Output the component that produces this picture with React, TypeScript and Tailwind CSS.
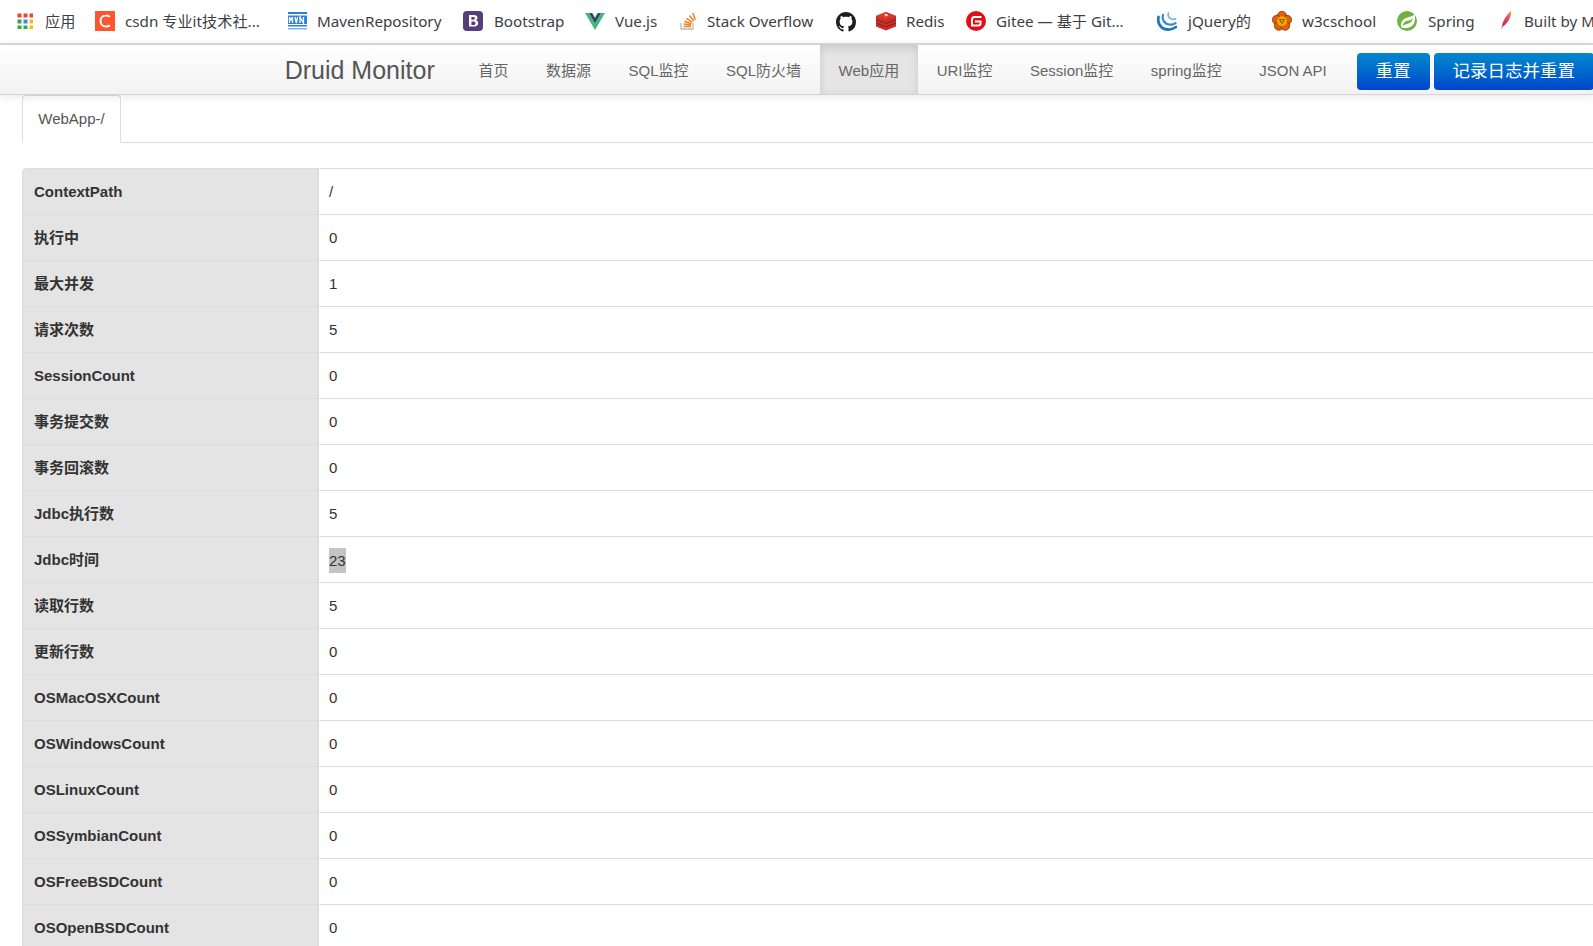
import React from "react";

const sans = `font-['Liberation_Sans','Noto_Sans_CJK_SC',sans-serif]`;

function AppsIcon() {
  const colors = ["#ea4335", "#ea4335", "#ea4335", "#34a853", "#4285f4", "#fbbc04", "#34a853", "#34a853", "#fbbc04"];
  return (
    <svg width="16" height="16" viewBox="0 0 16 16">
      {colors.map((c, i) => (
        <rect key={i} x={(i % 3) * 6 + 0.5} y={Math.floor(i / 3) * 6 + 0.5} width="4" height="4" fill={c} />
      ))}
    </svg>
  );
}

function CsdnIcon() {
  return (
    <svg width="20" height="20" viewBox="0 0 20 20">
      <rect width="20" height="20" fill="#fc5531" />
      <path d="M14.8 5.8A5.8 5.8 0 0 0 11 4.5C7.6 4.5 5.5 7 5.5 10s2.1 5.5 5.5 5.5a5.8 5.8 0 0 0 3.800-1.300" fill="none" stroke="#fff" strokeWidth="2" />
    </svg>
  );
}

function MavenIcon() {
  return (
    <svg width="19" height="20" viewBox="0 0 19 20">
      <rect y="1" width="19" height="2" fill="#2a7de1" />
      <rect y="4.5" width="19" height="8.5" fill="#2a7de1" />
      <rect y="14" width="19" height="1.5" fill="#2a7de1" />
      <rect y="17" width="19" height="1.5" fill="#7fb2ee" />
      <path d="M1.5 12V6l1.500 3 1.500-3v6M7 6l1.300 6 1.300-6M12 12V6l3.500 6V6" fill="none" stroke="#fff" strokeWidth="1.3" />
    </svg>
  );
}

function BootstrapIcon() {
  return (
    <svg width="20" height="20" viewBox="0 0 20 20">
      <rect width="20" height="20" rx="4" fill="#563d7c" />
      <path d="M6 4h5c2.200 0 3.500 1.100 3.500 2.800 0 1.200-.7 2.100-1.800 2.500 1.500.2 2.500 1.300 2.500 2.800 0 2-1.500 3.400-3.800 3.400H6zM8.400 6v2.700h1.900c1 0 1.600-.5 1.600-1.400S11.300 6 10.300 6zm0 4.500V14h2.200c1.200 0 1.900-.6 1.900-1.800s-.7-1.700-2-1.700z" fill="#fff" fillRule="evenodd" />
    </svg>
  );
}

function VueIcon() {
  return (
    <svg width="20" height="20" viewBox="0 0 20 18">
      <path d="M0 1h4l6 10.500L16 1h4L10 18z" fill="#41b883" />
      <path d="M4 1h3.200L10 5.800 12.800 1H16l-6 10.500z" fill="#34495e" />
    </svg>
  );
}

function StackIcon() {
  return (
    <svg width="16" height="18" viewBox="0 0 16 18">
      <path d="M1 11v6h12v-6" fill="none" stroke="#bcbbbb" strokeWidth="1.3" />
      <path d="M3.500 14.500h7.500M3.700 12l7.300 1M4.500 9.200l6.900 2.600M6.500 6.300l6 4M9.400 3.500l4.600 5.600M12.800 1l2.600 6.800" stroke="#f48024" strokeWidth="1.5" fill="none" />
    </svg>
  );
}

function GithubIcon() {
  return (
    <svg width="20" height="20" viewBox="0 0 16 16">
      <path fill="#1b1f23" d="M8 0C3.580 0 0 3.580 0 8c0 3.540 2.290 6.530 5.470 7.590.4.070.55-.17.55-.38 0-.19-.010-.82-.010-1.490-2.010.370-2.530-.49-2.690-.94-.09-.23-.48-.94-.82-1.130-.28-.150-.68-.52-.010-.53.630-.010 1.080.580 1.230.820.720 1.210 1.870.870 2.330.660.070-.520.280-.870.510-1.070-1.780-.200-3.640-.890-3.640-3.950 0-.870.310-1.590.820-2.150-.080-.200-.360-1.020.080-2.120 0 0 .670-.210 2.200.820.640-.180 1.320-.270 2-.270s1.360.090 2 .270c1.530-1.040 2.200-.820 2.200-.820.440 1.100.160 1.920.080 2.120.510.560.820 1.270.820 2.150 0 3.070-1.870 3.750-3.650 3.950.290.250.540.730.540 1.480 0 1.070-.010 1.930-.010 2.200 0 .210.150.460.550.380A8.010 8.010 0 0 0 16 8c0-4.420-3.580-8-8-8z" />
    </svg>
  );
}

function RedisIcon() {
  return (
    <svg width="20" height="20" viewBox="0 0 20 20">
      <path d="M0 5v10.500L10 19.500l10-4V5L10 1z" fill="#c6302b" />
      <path d="M0 8.500 10 12.500l10-4M0 12 10 16l10-4" fill="none" stroke="#8f1d18" strokeWidth="1" />
      <path d="M10 1 20 5l-10 4L0 5z" fill="#dc382d" />
      <path d="M9.500 2.500l1 1 1.500-.5-.8 1.100 1 .9-1.500-.2-1 1-.3-1.300-1.500-.4 1.300-.5z" fill="#fff" />
    </svg>
  );
}

function GiteeIcon() {
  return (
    <svg width="20" height="20" viewBox="0 0 20 20">
      <circle cx="10" cy="10" r="10" fill="#e00f17" />
      <path d="M15.500 5H8.500A3.500 3.500 0 0 0 5 8.500V15.500h7.500a3 3 0 0 0 3-3V9.500H9v2h4.500v1a1 1 0 0 1-1 1H7V8.500A1.500 1.500 0 0 1 8.500 7h7z" fill="#fff" />
    </svg>
  );
}

function JqueryIcon() {
  return (
    <svg width="20" height="20" viewBox="0 0 20 20" fill="none" strokeLinecap="round">
      <path d="M1.500 6c-1.300 5 1.500 12 9 12.500 3.500.2 6.500-1 8.500-2.500" stroke="#1f77bb" strokeWidth="2.8" />
      <path d="M6 4c-1.200 4 1 9 6.500 9.500 2.200.2 4.500-.3 6-1.300" stroke="#2d8ccb" strokeWidth="2.2" />
      <path d="M11.500 2c-1.200 2.800.5 6 4 6.300 1 .1 2-.1 3-.5" stroke="#78b7df" strokeWidth="1.8" />
    </svg>
  );
}

function W3Icon() {
  return (
    <svg width="20" height="20" viewBox="0 0 20 20">
      <circle cx="10" cy="5" r="4.7" fill="#e85d04" stroke="#5f3a10" strokeWidth=".7" />
      <circle cx="4.8" cy="8.8" r="4.5" fill="#e85d04" stroke="#5f3a10" strokeWidth=".7" />
      <circle cx="15.2" cy="8.8" r="4.5" fill="#e85d04" stroke="#5f3a10" strokeWidth=".7" />
      <circle cx="6.8" cy="14.8" r="4.5" fill="#e85d04" stroke="#5f3a10" strokeWidth=".7" />
      <circle cx="13.2" cy="14.8" r="4.5" fill="#e85d04" stroke="#5f3a10" strokeWidth=".7" />
      <circle cx="10" cy="10.2" r="5" fill="#f2a900" />
      <path d="M6.800 8h6.400L10 13.500z" fill="#8a5a00" />
      <path d="M8.500 9h3L10 11.500z" fill="#f2a900" />
    </svg>
  );
}

function SpringIcon() {
  return (
    <svg width="20" height="20" viewBox="0 0 20 20">
      <circle cx="10" cy="10" r="10" fill="#6db33f" />
      <path d="M17.500 2.500C16.500 6 12.500 5 8 7.500c-3.500 2-5 5.500-3.500 9 4.500 1.500 10 .5 12.500-4 1.300-3 1.300-6.500.5-10z" fill="#fff" />
      <path d="M15.800 6.500C14.500 10 11 9 8.500 10.500 7 11.500 6 13 5.200 15.500c2.800-3 6.300-2 8.800-4.500 1-1 1.700-2.800 1.800-4.500z" fill="#6db33f" />
    </svg>
  );
}

function QuillIcon() {
  return (
    <svg width="20" height="20" viewBox="0 0 20 20">
      <defs>
        <linearGradient id="quill" x1="0.9" y1="0" x2="0.1" y2="1">
          <stop offset="0" stopColor="#f59331" />
          <stop offset="0.35" stopColor="#e04a5f" />
          <stop offset="0.75" stopColor="#c8246e" />
          <stop offset="1" stopColor="#d7d7e4" />
        </linearGradient>
      </defs>
      <path d="M3 20C3.500 13 7 5 13 0c.5 4-1.500 11-8 15.500z" fill="url(#quill)" />
    </svg>
  );
}

const bookmarks: { icon: React.ReactNode; text: string; cls: string }[] = [
  { icon: <AppsIcon />, text: "应用", cls: "w-[78px] gap-[12px]" },
  { icon: <CsdnIcon />, text: "csdn 专业it技术社...", cls: "w-[193px] gap-[10px]" },
  { icon: <MavenIcon />, text: "MavenRepository", cls: "w-[175px] gap-[10px]" },
  { icon: <BootstrapIcon />, text: "Bootstrap", cls: "w-[122px] gap-[11px]" },
  { icon: <VueIcon />, text: "Vue.js", cls: "w-[95px] gap-[10px]" },
  { icon: <StackIcon />, text: "Stack Overflow", cls: "w-[156px] gap-[11px]" },
  { icon: <GithubIcon />, text: "", cls: "w-[40px]" },
  { icon: <RedisIcon />, text: "Redis", cls: "w-[90px] gap-[10px]" },
  { icon: <GiteeIcon />, text: "Gitee — 基于 Git...", cls: "w-[191px] gap-[10px]" },
  { icon: <JqueryIcon />, text: "jQuery的", cls: "w-[115px] gap-[11px]" },
  { icon: <W3Icon />, text: "w3cschool", cls: "w-[125px] gap-[10px]" },
  { icon: <SpringIcon />, text: "Spring", cls: "w-[101px] gap-[11px]" },
  { icon: <QuillIcon />, text: "Built by M", cls: "w-[120px] gap-[6px]" },
];

const navItems = ["首页", "数据源", "SQL监控", "SQL防火墙", "Web应用", "URI监控", "Session监控", "spring监控", "JSON API"];

const rows: [string, string][] = [
  ["ContextPath", "/"],
  ["执行中", "0"],
  ["最大并发", "1"],
  ["请求次数", "5"],
  ["SessionCount", "0"],
  ["事务提交数", "0"],
  ["事务回滚数", "0"],
  ["Jdbc执行数", "5"],
  ["Jdbc时间", "23"],
  ["读取行数", "5"],
  ["更新行数", "0"],
  ["OSMacOSXCount", "0"],
  ["OSWindowsCount", "0"],
  ["OSLinuxCount", "0"],
  ["OSSymbianCount", "0"],
  ["OSFreeBSDCount", "0"],
  ["OSOpenBSDCount", "0"],
];

export default function App() {
  return (
    <div className={`h-screen overflow-hidden bg-white text-[15px] text-[#333] ${sans}`}>
      {/* bookmarks */}
      <div className="flex h-[45px] items-center overflow-hidden whitespace-nowrap border-b-[2px] border-[#dadce0] bg-white pl-[17px] font-['Noto_Sans','Noto_Sans_CJK_SC',sans-serif] text-[15.2px] text-[#3c4043]">
        {bookmarks.map((b) => (
          <div key={b.text || "github"} className={`flex shrink-0 items-center ${b.cls}`}>
            <span className="shrink-0">{b.icon}</span>
            {b.text && <span>{b.text}</span>}
          </div>
        ))}
      </div>

      {/* nav */}
      <div className="relative z-10 flex h-[50px] items-stretch justify-end whitespace-nowrap border-b border-[#d4d4d4] bg-gradient-to-b from-white to-[#f2f2f2] shadow-[0_1px_10px_rgba(0,0,0,0.1)]">
        <div className="flex items-center pt-[2px] pr-[25px] text-[25px] text-[#555]">Druid Monitor</div>
        {navItems.map((item) => (
          <div
            key={item}
            className={`flex items-center px-[18.75px] pt-[3px] text-[#666] ${item === "Web应用" ? "bg-[#e5e5e5] shadow-[inset_0_3px_8px_rgba(0,0,0,0.125)]" : ""}`}
          >
            {item}
          </div>
        ))}
        <div className="-mr-px flex items-center gap-[4px] pt-[3px] pl-[11px]">
          <button className="h-[37px] rounded-[4px] bg-gradient-to-b from-[#0088cc] to-[#0044cc] px-[19px] text-[17.5px] text-white">重置</button>
          <button className="h-[37px] rounded-[4px] bg-gradient-to-b from-[#0088cc] to-[#0044cc] px-[19px] text-[17.5px] text-white">记录日志并重置</button>
        </div>
      </div>

      <div className="pl-[22px]">
        {/* tabs */}
        <div className="flex h-[48px] items-end border-b border-[#ddd]">
          <div className="-mb-px flex h-[48px] w-[99px] items-center justify-center rounded-t-[4px] border border-b-white border-[#ddd] bg-white text-[#555]">
            WebApp-/
          </div>
        </div>

        {/* detail table */}
        <div className="mt-[25px] overflow-hidden rounded-tl-[4px] border-t border-l border-[#ddd]">
          {rows.map(([label, value]) => (
            <div key={label} className="flex h-[46px] border-b border-[#ddd]">
              <div className="flex w-[296px] shrink-0 items-center border-r-[2px] border-[#ddd] bg-[#e4e4e4] pt-[2px] pr-[10px] pl-[11px] font-bold">{label}</div>
              <div className="flex items-center px-[10px] pt-[2px]">
                {value === "23" ? <span className="bg-[#c4c4c4] leading-[25px]">{value}</span> : value}
              </div>
            </div>
          ))}
        </div>
      </div>
    </div>
  );
}
